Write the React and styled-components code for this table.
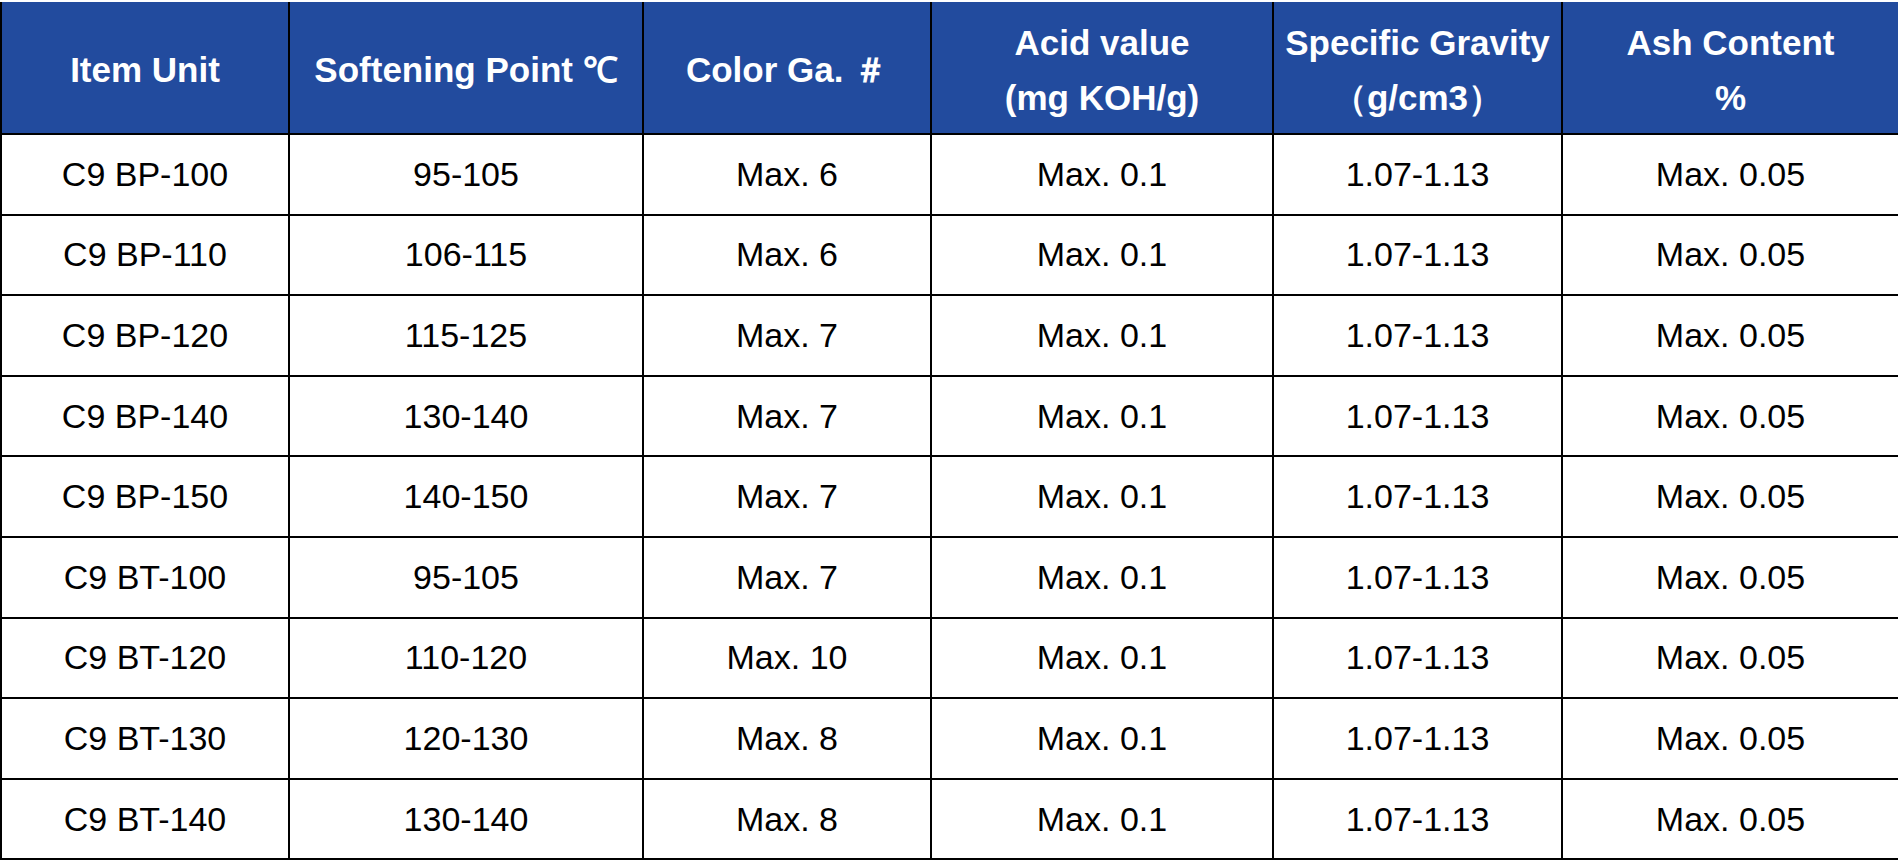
import styled, { createGlobalStyle } from "styled-components";

const GlobalStyle = createGlobalStyle`
  html, body {
    margin: 0;
    padding: 0;
    background: #ffffff;
  }
  body {
    font-family: "Liberation Sans", Arial, sans-serif;
  }
`;

const columns = [
  { width: 288, title: ["Item Unit"] },
  { width: 354, title: ["Softening Point ℃"] },
  { width: 288, title: ["Color Ga. ＃"] },
  { width: 342, title: ["Acid value", "(mg KOH/g)"] },
  { width: 289, title: ["Specific Gravity", "（g/cm3）"] },
  { width: 337, title: ["Ash Content", "%"] },
];

const rows = [
  ["C9 BP-100", "95-105", "Max. 6"],
  ["C9 BP-110", "106-115", "Max. 6"],
  ["C9 BP-120", "115-125", "Max. 7"],
  ["C9 BP-140", "130-140", "Max. 7"],
  ["C9 BP-150", "140-150", "Max. 7"],
  ["C9 BT-100", "95-105", "Max. 7"],
  ["C9 BT-120", "110-120", "Max. 10"],
  ["C9 BT-130", "120-130", "Max. 8"],
  ["C9 BT-140", "130-140", "Max. 8"],
];

function App() {
  return (
    <>
      <GlobalStyle />
      <Page>
        <SpecTable>
          <colgroup>
            {columns.map((c, i) => (
              <col key={i} style={{ width: c.width }} />
            ))}
          </colgroup>
          <thead>
            <HeadRow>
              {columns.map((c, i) => (
                <HeadCell key={i}>
                  {c.title.map((line, j) => (
                    <HeadLine key={j}>{line}</HeadLine>
                  ))}
                </HeadCell>
              ))}
            </HeadRow>
          </thead>
          <tbody>
            {rows.map((r, i) => (
              <BodyRow key={i}>
                <Cell>{r[0]}</Cell>
                <Cell>{r[1]}</Cell>
                <Cell>{r[2]}</Cell>
                <Cell>Max. 0.1</Cell>
                <Cell>1.07-1.13</Cell>
                <Cell>Max. 0.05</Cell>
              </BodyRow>
            ))}
          </tbody>
        </SpecTable>
      </Page>
    </>
  );
}

export default App;

const Page = styled.div`
  width: 1898px;
  height: 863px;
  padding-top: 2px;
  box-sizing: border-box;
  background: #ffffff;
`;

const SpecTable = styled.table`
  width: 1898px;
  table-layout: fixed;
  border-collapse: collapse;
  border: 2px solid #000000;
  border-top: none;
`;

const HeadRow = styled.tr`
  height: 132px;
  background: #224b9e;
`;

const HeadCell = styled.th`
  border: 2px solid #000000;
  border-top: none;
  padding: 0;
  color: #ffffff;
  font-size: 35px;
  font-weight: 700;
  text-align: center;
  vertical-align: middle;
  line-height: 55px;
  padding-top: 4px;
`;

const HeadLine = styled.div`
  white-space: nowrap;
`;

const BodyRow = styled.tr`
  height: 80.6px;
`;

const Cell = styled.td`
  border: 2px solid #000000;
  padding: 0;
  color: #000000;
  font-size: 34px;
  text-align: center;
  vertical-align: middle;
  white-space: nowrap;
`;
